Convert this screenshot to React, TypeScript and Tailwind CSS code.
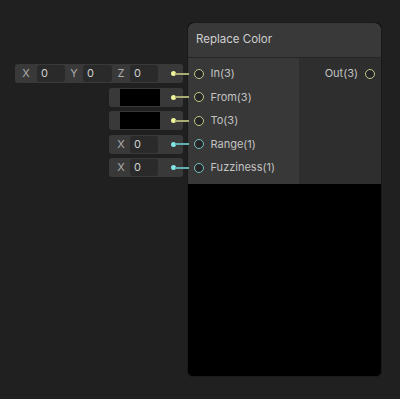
import React from "react";

type PortKind = "vec3" | "float";

const DOT: Record<PortKind, string> = {
  vec3: "bg-[#eef59a]",
  float: "bg-[#84e4e7]",
};
const WIRE: Record<PortKind, string> = {
  vec3: "bg-[#a9ad73]",
  float: "bg-[#63aeb1]",
};
const RING: Record<PortKind, string> = {
  vec3: "border-[#c2c68a]",
  float: "border-[#76bfc1]",
};

const inputs: { name: string; kind: PortKind }[] = [
  { name: "In(3)", kind: "vec3" },
  { name: "From(3)", kind: "vec3" },
  { name: "To(3)", kind: "vec3" },
  { name: "Range(1)", kind: "float" },
  { name: "Fuzziness(1)", kind: "float" },
];

function Field({ w }: { w: string }) {
  return (
    <div
      className={`${w} h-[17px] rounded-[3px] bg-[#2a2a2a] pl-[4px] text-[11px] leading-[17px] text-[#d0d0d0]`}
    >
      0
    </div>
  );
}

function Dot({ kind }: { kind: PortKind }) {
  return <div className={`w-[5px] h-[5px] rounded-full ${DOT[kind]}`} />;
}

function Port({ kind }: { kind: PortKind }) {
  return (
    <div
      className={`w-[10px] h-[10px] rounded-full border-[1.5px] bg-[#262626] ${RING[kind]}`}
    />
  );
}

export default function App() {
  return (
    <div
      className="w-[400px] h-[399px] bg-[#202020] flex pt-[22px]"
      style={{ fontFamily: "Inter, 'Liberation Sans', sans-serif" }}
    >
      {/* inline input fields */}
      <div className="w-[183px] mr-[4px] mt-[42px] flex flex-col items-end gap-[4.5px] text-[11px] text-[#acacac]">
        <div className="w-[168px] h-[19px] rounded-[3px] bg-[#393939] flex items-center">
          <span className="w-[22px] text-center">X</span>
          <Field w="w-[28px]" />
          <span className="w-[18px] text-center">Y</span>
          <Field w="w-[29px]" />
          <span className="w-[18px] text-center">Z</span>
          <Field w="w-[28px]" />
          <div className="ml-[12.5px]">
            <Dot kind="vec3" />
          </div>
        </div>
        {[0, 1].map((i) => (
          <div
            key={i}
            className="w-[74px] h-[19px] rounded-[3px] bg-[#393939] flex items-center pl-[11px]"
          >
            <div className="w-[40px] h-[17px] bg-black" />
            <div className="ml-[10.5px]">
              <Dot kind="vec3" />
            </div>
          </div>
        ))}
        {[0, 1].map((i) => (
          <div
            key={i}
            className="w-[74px] h-[19px] rounded-[3px] bg-[#393939] flex items-center"
          >
            <span className="w-[21px] pl-[3px] text-center">X</span>
            <Field w="w-[28px]" />
            <div className="ml-[12.5px]">
              <Dot kind="float" />
            </div>
          </div>
        ))}
      </div>

      {/* Replace Color node */}
      <div className="w-[195px] h-[355px] rounded-[6px] bg-black border border-[#1a1a1a] flex flex-col">
        <div className="h-[35px] shrink-0 rounded-t-[6px] bg-[#393939] border-b border-[#262626] pl-[8px] flex items-center text-[11.5px] text-[#cfcfcf]">
          Replace Color
        </div>
        <div className="h-[126px] shrink-0 flex bg-[#2e2e2e]">
          <div className="w-[111px] bg-[#383838] pt-[6px] flex flex-col gap-[4.5px]">
            {inputs.map((p) => (
              <div key={p.name} className="relative h-[19px] flex items-center pl-[6px]">
                <div
                  className={`absolute left-[-13px] top-[8.5px] w-[14px] h-[2px] ${WIRE[p.kind]}`}
                />
                <Port kind={p.kind} />
                <span className="ml-[6.5px] text-[11px] text-[#c2c2c2]">{p.name}</span>
              </div>
            ))}
          </div>
          <div className="flex-1 pt-[6px]">
            <div className="h-[19px] flex items-center justify-end pr-[6.5px]">
              <span className="text-[11px] text-[#c2c2c2]">Out(3)</span>
              <div className="ml-[6.5px]">
                <Port kind="vec3" />
              </div>
            </div>
          </div>
        </div>
        <div className="flex-1 rounded-b-[6px] bg-black" />
      </div>
    </div>
  );
}
